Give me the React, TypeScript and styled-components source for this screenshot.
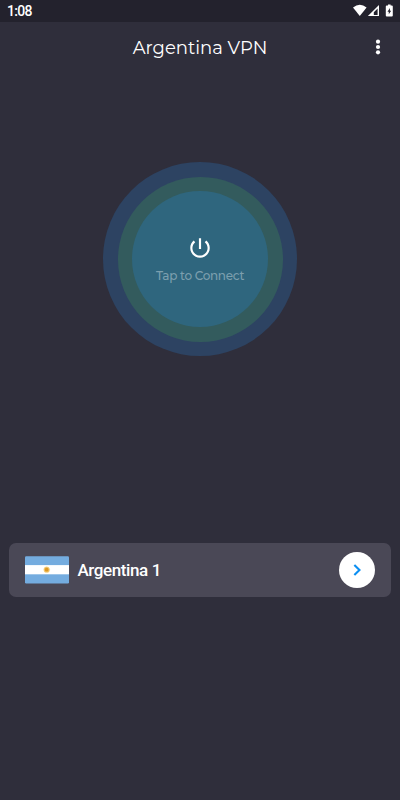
import React from "react";
import styled, { createGlobalStyle } from "styled-components";

const GlobalStyle = createGlobalStyle`
  * { box-sizing: border-box; }
  body { margin: 0; background: #2f2e3b; }
`;

const Screen = styled.div`
  width: 100%;
  height: 100vh;
  display: flex;
  flex-direction: column;
  background: #2f2e3b;
  color: #fff;
  font-family: Roboto, sans-serif;
  overflow: hidden;
`;

const StatusBar = styled.div`
  height: 22px;
  flex: none;
  display: flex;
  align-items: center;
  justify-content: space-between;
  padding: 0 6px 0 7px;
  background: #23222d;
`;

const Clock = styled.span`
  font-size: 14px;
  font-weight: 500;
  letter-spacing: -0.7px;
  line-height: 22px;
`;

const StatusIcons = styled.div`
  display: flex;
  align-items: center;
`;

const Header = styled.header`
  height: 50px;
  flex: none;
  display: grid;
  grid-template-columns: 44px 1fr 44px;
  align-items: center;
`;

const Title = styled.h1`
  grid-column: 2;
  margin: 0;
  padding-top: 2px;
  text-align: center;
  font-family: Montserrat, Inter, sans-serif;
  font-size: 18px;
  font-weight: 400;
  line-height: 24px;
  white-space: nowrap;
`;

const MenuButton = styled.button`
  border: 0;
  padding: 0;
  height: 44px;
  background: none;
  display: flex;
  align-items: center;
  justify-content: center;
`;

const ConnectArea = styled.main`
  height: 471px;
  flex: none;
  display: flex;
  justify-content: center;
  align-items: flex-start;
  padding-top: 90px;
`;

const Ring = styled.div<{ $size: number; $color: string }>`
  width: ${(p) => p.$size}px;
  height: ${(p) => p.$size}px;
  border-radius: 50%;
  background: ${(p) => p.$color};
  display: flex;
  flex: none;
  align-items: center;
  justify-content: center;
`;

const ConnectButton = styled.button`
  width: 136px;
  height: 136px;
  border: 0;
  border-radius: 50%;
  padding: 1px 0 0;
  background: #2f667e;
  display: flex;
  flex-direction: column;
  align-items: center;
  justify-content: center;
  gap: 7px;
`;

const ConnectLabel = styled.span`
  font-family: Montserrat, Inter, sans-serif;
  font-size: 12px;
  font-weight: 500;
  letter-spacing: -0.3px;
  line-height: 16px;
  color: #7c9fae;
  white-space: nowrap;
`;

const ServerCard = styled.section`
  height: 54px;
  flex: none;
  margin: 0 9px;
  padding: 0 16px;
  border-radius: 7px;
  background: #4a4856;
  display: flex;
  align-items: center;
`;

const ServerName = styled.span`
  flex: 1;
  margin-left: 8.5px;
  font-size: 17px;
  font-weight: 500;
  letter-spacing: -0.4px;
  line-height: 20px;
`;

const NextButton = styled.button`
  width: 36px;
  height: 36px;
  border: 0;
  border-radius: 50%;
  padding: 0;
  background: #fff;
  display: flex;
  align-items: center;
  justify-content: center;
`;

const SignalIcons = () => (
  <svg width="42" height="14" viewBox="0 0.5 42 14" fill="#fff">
    <path d="M1 4.1Q7.8-1.5 14.6 4.1L7.8 12.6Z" />
    <path fillRule="evenodd" d="M15.9 12.6L27 1.5V12.6ZM21.8 11.5H25.6V4.9L21.8 8.7Z" />
    <path
      transform="translate(-.8 0)"
      fillRule="evenodd"
      d="M35.6 2.1h1.2V1h2.6v1.1h1.2q1 0 1 1v8.8q0 1-1 1h-5q-1 0-1-1V3.1q0-1 1-1ZM38.7 4.6L36.3 8.2H37.6V10.8L40 7.2H38.7Z"
    />
  </svg>
);

const DotsIcon = () => (
  <svg width="6" height="18" viewBox="0 0 6 18" fill="#fff">
    <circle cx="3" cy="3.7" r="2.1" />
    <circle cx="3" cy="9" r="2.1" />
    <circle cx="3" cy="14.3" r="2.1" />
  </svg>
);

const PowerIcon = () => (
  <svg width="26" height="26" viewBox="0 0 24 24" fill="#fff">
    <path d="M13 3h-2v10h2V3zm4.83 2.17l-1.42 1.42C17.99 7.86 19 9.81 19 12c0 3.87-3.13 7-7 7s-7-3.13-7-7c0-2.19 1.01-4.14 2.58-5.42L6.17 5.17C4.23 6.82 3 9.26 3 12c0 4.97 4.03 9 9 9s9-4.03 9-9c0-2.74-1.23-5.18-3.17-6.83z" />
  </svg>
);

const Flag = () => (
  <svg width="44" height="28" viewBox="0 0 44 28">
    <clipPath id="flag-shape">
      <rect y="0.2" width="44" height="27.2" rx="1.2" />
    </clipPath>
    <g clipPath="url(#flag-shape)">
      <rect width="44" height="28" fill="#74acdf" />
      <rect y="9.1" width="44" height="9.2" fill="#fff" />
      <circle cx="21.7" cy="13.7" r="2.9" fill="#f2c76c" stroke="#f2c76c" strokeOpacity=".5" strokeDasharray=".6 .6" />
      <circle cx="21.7" cy="13.7" r="1.9" fill="#dc9826" />
    </g>
  </svg>
);

const ChevronIcon = () => (
  <svg width="22" height="22" viewBox="0 0 24 24" fill="none" stroke="#0c8ff2" strokeWidth="2.3">
    <path d="M9.1 6.5L14.7 12l-5.6 5.5" />
  </svg>
);

export default function App() {
  return (
    <>
      <GlobalStyle />
      <Screen>
        <StatusBar>
          <Clock>1:08</Clock>
          <StatusIcons>
            <SignalIcons />
          </StatusIcons>
        </StatusBar>
        <Header>
          <Title>Argentina VPN</Title>
          <MenuButton aria-label="More options">
            <DotsIcon />
          </MenuButton>
        </Header>
        <ConnectArea>
          <Ring $size={194} $color="#2d4362">
            <Ring $size={165} $color="#335b5d">
              <ConnectButton>
                <PowerIcon />
                <ConnectLabel>Tap to Connect</ConnectLabel>
              </ConnectButton>
            </Ring>
          </Ring>
        </ConnectArea>
        <ServerCard>
          <Flag />
          <ServerName>Argentina 1</ServerName>
          <NextButton aria-label="Choose server">
            <ChevronIcon />
          </NextButton>
        </ServerCard>
      </Screen>
    </>
  );
}
